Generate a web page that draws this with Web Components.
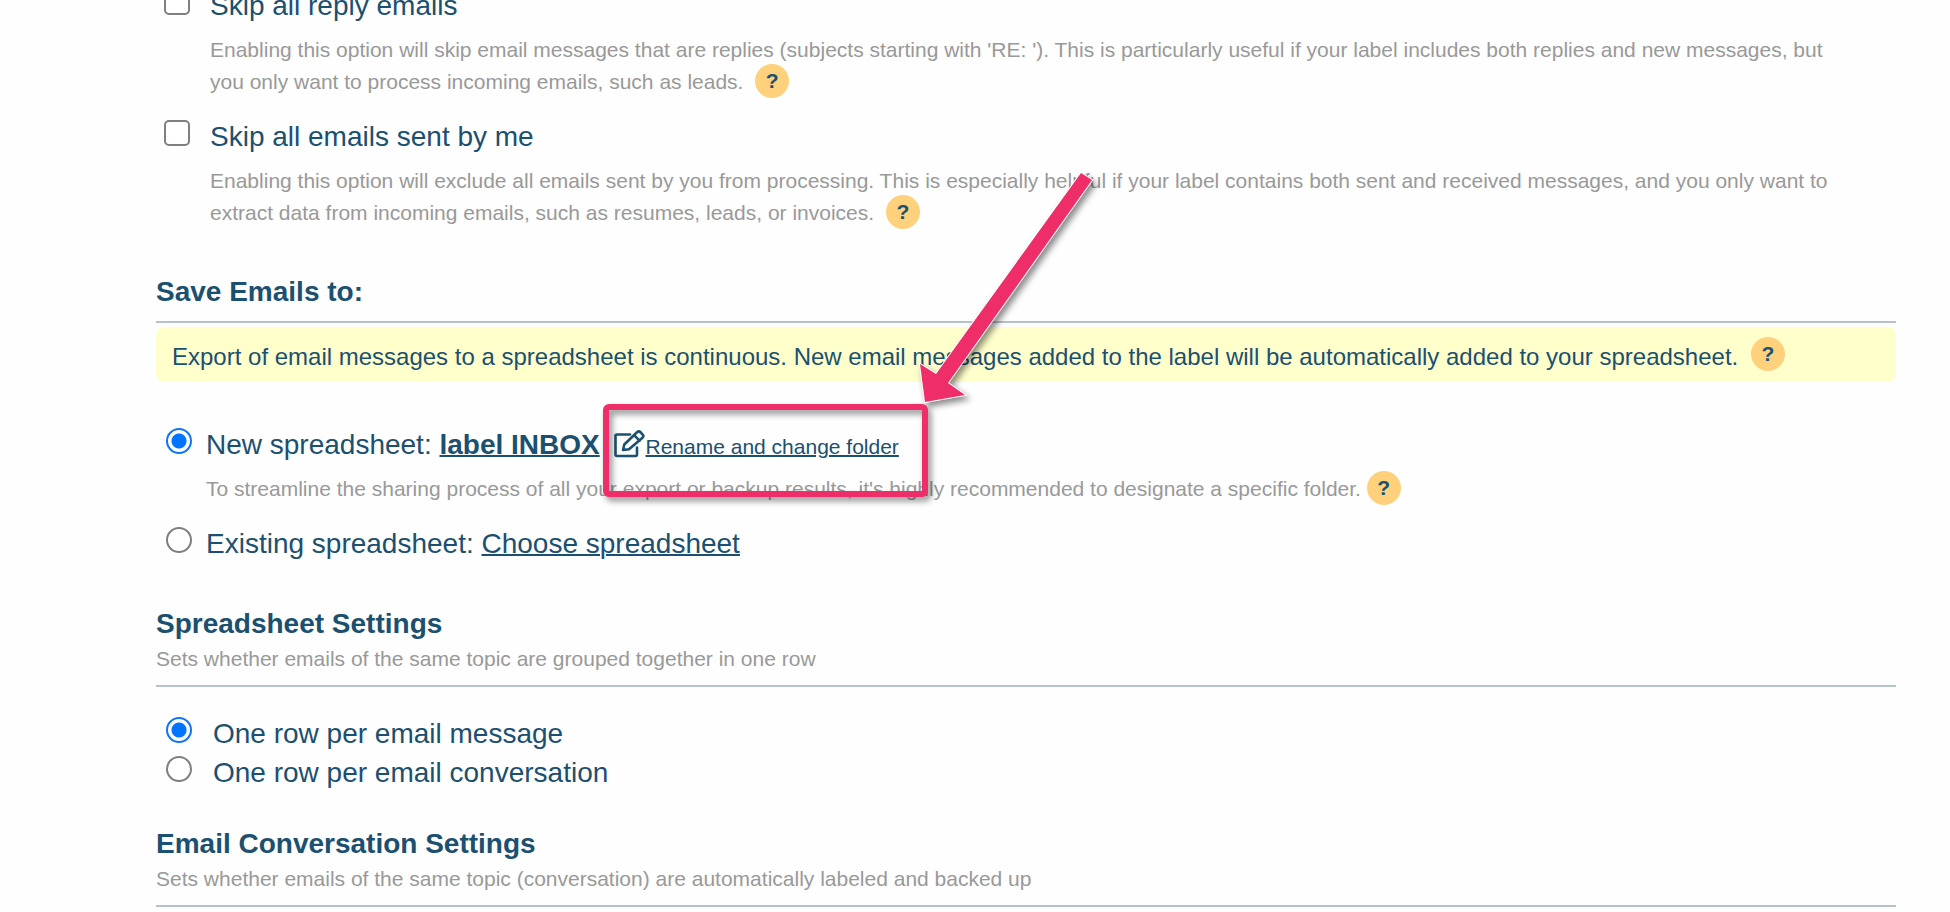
<!DOCTYPE html>
<html lang="en">
<head>
<meta charset="utf-8">
<meta name="viewport" content="width=device-width, initial-scale=1">
<title>Export settings</title>
<style>
    html, body {
        margin: 0;
        overflow: hidden;
    }

    body {
        background: #fefefe;
        color: #1b5070;
        font-family: "Liberation Sans", Arial, sans-serif;
        font-size: 28px;
        line-height: 39px;
    }

    a {
        color: inherit;
        text-decoration-thickness: 2px;
    }

    .first { margin-top: -14px; }
    .next { margin-top: 19px; }
    .save { margin-top: 44px; }
    .sheet { margin-top: 42px; }
    .conversation { margin-top: 33px; }
    .target { margin-top: 43px; }
    .rows { margin-top: 27px; }
</style>
</head>
<body>
<settings-page>
    <setting-option class="first" type="checkbox">
        Skip all reply emails
        <span slot="hint">Enabling this option will skip email messages that are replies (subjects starting with 'RE: '). This is particularly useful if your label includes both replies and new messages, but you only want to process incoming emails, such as leads. <help-badge spaced></help-badge></span>
    </setting-option>
    <setting-option class="next" type="checkbox">
        Skip all emails sent by me
        <span slot="hint">Enabling this option will exclude all emails sent by you from processing. This is especially helpful if your label contains both sent and received messages, and you only want to extract data from incoming emails, such as resumes, leads, or invoices. <help-badge spaced></help-badge></span>
    </setting-option>

    <section-title class="save">Save Emails to:</section-title>
    <info-banner>Export of email messages to a spreadsheet is continuous. New email messages added to the label will be automatically added to your spreadsheet.</info-banner>

    <setting-option class="target" type="radio" group="target" checked>
        New spreadsheet: <a href="#label"><b>label INBOX</b></a>
        <edit-link slot="action" href="#rename">Rename and change folder</edit-link>
        <span slot="hint">To streamline the sharing process of all your export or backup results, it's highly recommended to designate a specific folder. <help-badge></help-badge></span>
    </setting-option>
    <setting-option class="next" type="radio" group="target">
        Existing spreadsheet: <a href="#choose">Choose spreadsheet</a>
    </setting-option>

    <section-title class="sheet">Spreadsheet Settings
        <span slot="note">Sets whether emails of the same topic are grouped together in one row</span>
    </section-title>
    <setting-option class="rows" type="radio" group="rows" wide checked>One row per email message</setting-option>
    <setting-option type="radio" group="rows" wide>One row per email conversation</setting-option>

    <section-title class="conversation">Email Conversation Settings
        <span slot="note">Sets whether emails of the same topic (conversation) are automatically labeled and backed up</span>
    </section-title>

    <callout-arrow slot="overlay"></callout-arrow>
</settings-page>

<script>
class SettingsPage extends HTMLElement {
    constructor() {
        super();
        this.attachShadow({mode: 'open'});
        this.shadowRoot.innerHTML = `
      <style>
    :host {
        display: block;
        position: relative;
    }

    main {
        display: flex;
        flex-direction: column;
        padding: 0 54px 0 156px;
    }
      </style>
      <main><slot></slot></main>
      <slot name="overlay"></slot>
  `;
    }
}

class SectionTitle extends HTMLElement {
    constructor() {
        super();
        this.attachShadow({mode: 'open'});
        this.shadowRoot.innerHTML = `
      <style>
    :host {
        display: block;
        padding-bottom: 10px;
        border-bottom: 2px solid #b5c2c9;
    }

    h2 {
        margin: 0;
        font-size: 28px;
        line-height: 38px;
    }

    ::slotted([slot="note"]) {
        display: block;
        color: #999;
        font-size: 21px;
        line-height: 32px;
    }
      </style>
      <h2><slot></slot></h2>
      <slot name="note"></slot>
  `;
    }
}

class HelpBadge extends HTMLElement {
    constructor() {
        super();
        this.attachShadow({mode: 'open'});
        this.shadowRoot.innerHTML = `
      <style>
    :host {
        display: inline-block;
        margin: -4px 0;
        vertical-align: 1px;
    }

    :host([spaced]) {
        margin-left: 6px;
    }

    button {
        width: 34px;
        height: 34px;
        padding: 0;
        border: 0;
        border-radius: 50%;
        background: #ffd17d;
        color: #1b5070;
        font: bold 21px/34px "Liberation Sans", Arial, sans-serif;
        text-align: center;
        cursor: pointer;
    }
      </style>
      <button type="button">?</button>
  `;
    }
}

class InfoBanner extends HTMLElement {
    constructor() {
        super();
        this.attachShadow({mode: 'open'});
        this.shadowRoot.innerHTML = `
      <style>
    :host {
        display: block;
        margin-top: 4px;
        padding: 13px 16px 8px;
        border-radius: 8px;
        background: #ffffcc;
        font-size: 24px;
        line-height: 34px;
    }

    help-badge {
        vertical-align: 4px;
    }
      </style>
      <slot></slot> <help-badge spaced></help-badge>
  `;
    }
}

class EditLink extends HTMLElement {
    constructor() {
        super();
        this.attachShadow({mode: 'open'});
        this.shadowRoot.innerHTML = `
      <style>
    :host {
        display: inline;
        margin-left: 6px;
        font-size: 21px;
        line-height: 24px;
    }

    a {
        color: inherit;
        text-decoration-thickness: 2px;
    }

    svg {
        width: 32px;
        height: 28px;
        vertical-align: -4px;
        fill: none;
        stroke: currentColor;
        stroke-width: 2.6;
        stroke-linejoin: round;
        stroke-linecap: round;
    }
      </style>
      <a><svg viewBox="0 0 32 28" aria-hidden="true">
        <path d="M16 4.5H3A1.5 1.5 0 0 0 1.5 6v18.500A1.500 1.500 0 0 0 3 26h18.500a1.500 1.500 0 0 0 1.500-1.500v-7"/>
        <path d="M9 20l1.300-5.500L23 2.300a2.500 2.500 0 0 1 3.500 0l2 2a2.500 2.500 0 0 1 0 3.500L15 19.300z"/>
        <path d="M20.300 5.300l5.300 5.300"/>
      </svg><slot></slot></a>
  `;
    }

    connectedCallback() {
        this.shadowRoot.querySelector('a').href = this.getAttribute('href');
    }
}

class SettingOption extends HTMLElement {
    constructor() {
        super();
        this.attachShadow({mode: 'open'});
        this.shadowRoot.innerHTML = `
      <style>
    :host {
        display: flex;
        align-items: flex-start;
        gap: 20px;
        padding-left: 8px;
    }

    :host([type="radio"]) {
        gap: 14px;
        padding-left: 10px;
    }

    :host([type="radio"][wide]) {
        gap: 21px;
    }

    input {
        appearance: none;
        flex: none;
        box-sizing: border-box;
        width: 26px;
        height: 26px;
        margin: 3px 0 0;
        border: 2px solid #7f7f7f;
        border-radius: 5px;
        background: #fff;
    }

    input[type="radio"] {
        border-radius: 50%;
    }

    input:checked {
        border-color: #0d74fb;
        background: radial-gradient(circle, #0075ff 7px, #fff 8px);
    }

    .body {
        flex: 1;
        padding-right: 50px;
    }

    ::slotted([slot="hint"]) {
        display: block;
        margin-top: 9px;
        color: #999;
        font-size: 21px;
        line-height: 32px;
    }
      </style>
      <input id="control">
      <div class="body">
        <label for="control"><slot></slot></label>
        <slot name="action"></slot>
        <slot name="hint"></slot>
      </div>
  `;
    }

    connectedCallback() {
        const input = this.shadowRoot.querySelector('input');
        input.type = this.getAttribute('type');
        input.checked = this.hasAttribute('checked');
        input.addEventListener('change', () => this.clearGroup());
    }

    // every radio sits in its own shadow root, so the group is kept by hand
    clearGroup() {
        const group = this.getAttribute('group');
        if (!group) return;
        for (const other of document.querySelectorAll(`setting-option[group="${group}"]`)) {
            if (other !== this) other.shadowRoot.querySelector('input').checked = false;
        }
    }
}

class CalloutArrow extends HTMLElement {
    constructor() {
        super();
        this.attachShadow({mode: 'open'});
        this.shadowRoot.innerHTML = `
      <style>
    :host {
        position: absolute;
        top: 0;
        left: 0;
        pointer-events: none;
    }

    svg {
        display: block;
        overflow: visible;
        filter: drop-shadow(3px 4px 3px rgba(0, 0, 0, 0.45));
    }
      </style>
      <svg width="1100" height="510" aria-hidden="true">
        <rect x="606" y="407" width="319" height="87" rx="3" fill="none" stroke="#ee2d69" stroke-width="6"/>
        <path d="M1081 173L1092 180L948 383L965 395L925 402L920 364L936 374Z" fill="#ee2d69" stroke="#fff" stroke-width="2" paint-order="stroke"/>
      </svg>
  `;
    }
}

customElements.define('settings-page', SettingsPage);
customElements.define('section-title', SectionTitle);
customElements.define('help-badge', HelpBadge);
customElements.define('info-banner', InfoBanner);
customElements.define('edit-link', EditLink);
customElements.define('setting-option', SettingOption);
customElements.define('callout-arrow', CalloutArrow);
</script>
</body>
</html>
